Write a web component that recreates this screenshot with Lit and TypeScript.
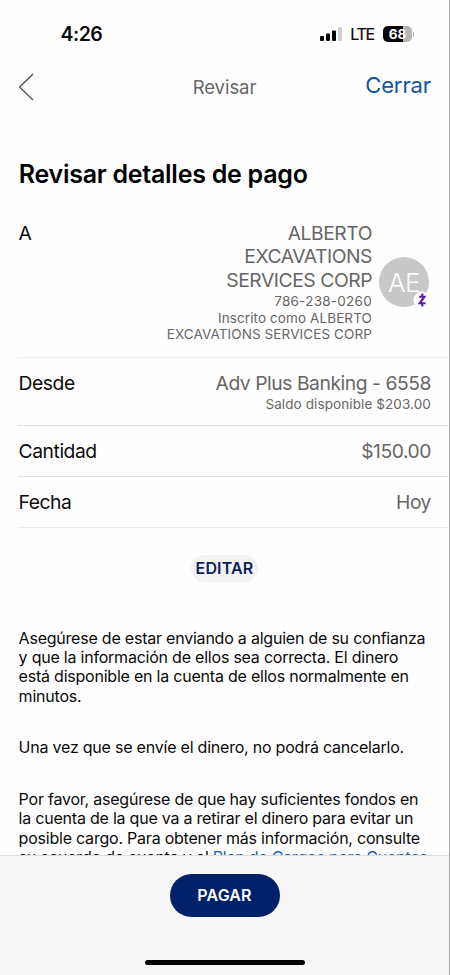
import { LitElement, html, css } from "lit";
import { customElement } from "lit/decorators.js";

@customElement("app-root")
export class AppRoot extends LitElement {
  static styles = css`
    :host {
      display: flex;
      flex-direction: column;
      box-sizing: border-box;
      width: 450px;
      height: 975px;
      overflow: hidden;
      background: #fefefe;
      border-right: 1px solid #a9a9a9;
      font-family: Inter, "Liberation Sans", sans-serif;
      color: #0a0a0a;
      white-space: nowrap;
    }
    svg { display: block; flex: none; }
    .status {
      flex: none;
      display: flex;
      align-items: center;
      height: 68px;
      padding: 0 35px 0 60.5px;
    }
    .time { flex: 1; font-size: 19.5px; font-weight: 600; letter-spacing: -0.5px; }
    .lte { margin: 0 9px 0 8px; font-size: 16px; letter-spacing: -1.2px; line-height: 20px; -webkit-text-stroke: 0.2px #0a0a0a; }
    .battery {
      width: 29px;
      height: 16px;
      border-radius: 5px;
      background: linear-gradient(90deg, #050505 68%, #b5b5b5 68%);
      color: #fff;
      font-size: 13.5px;
      font-weight: 700;
      line-height: 16px;
      text-align: center;
    }
    .cap { width: 1px; height: 5px; margin-left: 1px; border-radius: 0 2px 2px 0; background: #b5b5b5; }
    .nav {
      flex: none;
      display: grid;
      grid-template-columns: 1fr auto 1fr;
      align-items: center;
      height: 40px;
      padding: 0 18px 0 18px;
    }
    .back { margin-bottom: 3px; }
    .screen { font-size: 18.5px; color: #666; letter-spacing: -0.05px; padding-bottom: 2px; }
    .close { justify-self: end; font-size: 22px; line-height: 28px; color: #0f55a8; letter-spacing: -0.1px; padding-bottom: 6px; }
    .main { flex: 1; min-height: 0; overflow: hidden; }
    .title { margin: 0; padding: 49px 0 0 18.7px; font-size: 25px; line-height: 34px; font-weight: 600; letter-spacing: -0.26px; color: #000; }
    .rows { padding: 31px 0 0 18px; }
    .row {
      display: flex;
      justify-content: space-between;
      box-sizing: border-box;
      border-bottom: 1px solid #e4e4e4;
      padding: 14px 18px 0 0.6px;
    }
    .to { height: 136px; padding-top: 0; border-color: #efefef; }
    .from { height: 68px; }
    .plain { height: 51px; }
    .last { border-color: #ececec; }
    .label, .value { font-size: 19.3px; line-height: 23.3px; letter-spacing: -0.45px; }
    .value { color: #666; text-align: right; }
    .payee { display: flex; align-items: center; gap: 7px; height: 120px; }
    .small { font-size: 13.5px; line-height: 18px; letter-spacing: 0.1px; }
    .phone { letter-spacing: 0.26px; }
    .tight { line-height: 16px; }
    .avatar {
      position: relative;
      width: 50px;
      height: 50px;
      border-radius: 50%;
      background: #c8c8c8;
      color: #fff;
      font-size: 26px;
      font-weight: 300;
      letter-spacing: -0.6px;
      line-height: 51px;
      text-align: center;
      margin: 0 2px 0 0;
    }
    .badge { position: absolute; right: -2px; bottom: -2px; }
    .edit {
      display: block;
      width: 67px;
      height: 27px;
      margin: 27px auto 0;
      border: 0;
      border-radius: 14px;
      padding: 0;
      background: #f3f3f4;
      color: #0a1f5c;
      font: 600 16px/27px Inter, sans-serif;
      letter-spacing: 0.15px;
    }
    .notes { padding: 47px 0 0 18.6px; font-size: 16px; line-height: 19.2px; letter-spacing: -0.22px; }
    .notes p { margin: 0 0 32.6px; }
    .link { color: #1f62ac; }
    .footer {
      flex: none;
      box-sizing: border-box;
      height: 120px;
      border-top: 1px solid #dcdcdc;
      background: #f7f7f7;
      display: flex;
      flex-direction: column;
      align-items: center;
      padding-top: 18px;
    }
    .pay {
      width: 110px;
      height: 43px;
      border: 0;
      border-radius: 22px;
      padding: 0;
      background: #012169;
      color: #fff;
      font: 600 16px/43px Inter, sans-serif;
      letter-spacing: 0.15px;
    }
    .home { width: 160px; height: 5px; margin-top: 43px; border-radius: 3px; background: #000; }
  `;

  render() {
    return html`
      <div class="status">
        <div class="time">4:26</div>
        <svg width="22" height="14" viewBox="0 0 22 14">
          <rect x="0" y="9" width="4" height="5" rx="1" fill="#050505" />
          <rect x="6" y="6.5" width="4" height="7.5" rx="1" fill="#050505" />
          <rect x="12" y="3.5" width="4" height="10.5" rx="1" fill="#050505" />
          <rect x="18" y="0" width="4" height="14" rx="1" fill="#cfcfcf" />
        </svg>
        <div class="lte">LTE</div>
        <div class="battery">68</div>
        <div class="cap"></div>
      </div>
      <div class="nav">
        <svg class="back" width="17" height="28" viewBox="0 0 17 28" fill="none" stroke="#555" stroke-width="1.4">
          <path d="M15 1L1.6 14L15 27" />
        </svg>
        <div class="screen">Revisar</div>
        <div class="close">Cerrar</div>
      </div>
      <div class="main">
        <h1 class="title">Revisar detalles de pago</h1>
        <div class="rows">
          <div class="row to">
            <div class="label">A</div>
            <div class="payee">
              <div class="value">
                <div>ALBERTO</div>
                <div>EXCAVATIONS</div>
                <div>SERVICES CORP</div>
                <div class="small phone">786-238-0260</div>
                <div class="small tight">Inscrito como ALBERTO</div>
                <div class="small tight">EXCAVATIONS SERVICES CORP</div>
              </div>
              <div class="avatar">AE
                <svg class="badge" width="18" height="18" viewBox="0 0 18 18" fill="none">
                  <circle cx="9" cy="9" r="8.5" fill="#fefefe" />
                  <path d="M6.1 5.7H11.4L6.7 12.3H12.6M9.3 2.6V6M9.3 12V15.6" stroke="#5a1fa8" stroke-width="2.1" />
                </svg>
              </div>
            </div>
          </div>
          <div class="row from">
            <div class="label">Desde</div>
            <div class="value">
              <div>Adv Plus Banking - 6558</div>
              <div class="small">Saldo disponible $203.00</div>
            </div>
          </div>
          <div class="row plain">
            <div class="label">Cantidad</div>
            <div class="value">$150.00</div>
          </div>
          <div class="row plain last">
            <div class="label">Fecha</div>
            <div class="value">Hoy</div>
          </div>
        </div>
        <button class="edit">EDITAR</button>
        <div class="notes">
          <p>Asegúrese de estar enviando a alguien de su confianza<br />y que la información de ellos sea correcta. El dinero<br />está disponible en la cuenta de ellos normalmente en<br />minutos.</p>
          <p>Una vez que se envíe el dinero, no podrá cancelarlo.</p>
          <p>Por favor, asegúrese de que hay suficientes fondos en<br />la cuenta de la que va a retirar el dinero para evitar un<br />posible cargo. Para obtener más información, consulte<br />su acuerdo de cuenta y el <span class="link">Plan de Cargos para Cuentas</span></p>
        </div>
      </div>
      <div class="footer">
        <button class="pay">PAGAR</button>
        <div class="home"></div>
      </div>
    `;
  }
}
